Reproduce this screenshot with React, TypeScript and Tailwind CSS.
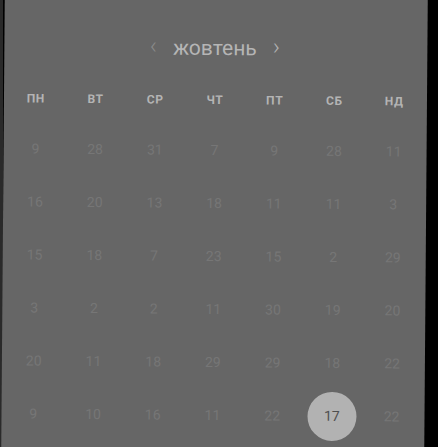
const weekdays = ['пн', 'вт', 'ср', 'чт', 'пт', 'сб', 'нд'];

const rows: number[][] = [
  [9, 28, 31, 7, 9, 28, 11],
  [16, 20, 13, 18, 11, 11, 3],
  [15, 18, 7, 23, 15, 2, 29],
  [3, 2, 2, 11, 30, 19, 20],
  [20, 11, 18, 29, 29, 18, 22],
  [9, 10, 16, 11, 22, 17, 22],
];

const App = () => {
  return (
    <div className="w-[438px] h-[447px] overflow-hidden bg-black" style={{ fontFamily: 'Roboto, "Open Sans", sans-serif' }}>
      <div className="flex h-full w-full">
        <div className="w-[3px] shrink-0 bg-[#2a2a2a]" />
        <div className="relative w-[423px] h-[460px] -mt-[6px] shrink-0 bg-[#666666] rotate-[0.45deg] origin-center">
          {/* Month switcher */}
          <div className="flex items-center justify-center gap-[16px] pt-[30px] h-[78px] -ml-[2px]">
            <span className="text-[24px] font-light leading-none text-[#8a8a8a] -mt-[5px]">‹</span>
            <span className="text-[21px] leading-none text-[#b5b5b5]">жовтень</span>
            <span className="text-[24px] font-light leading-none text-[#b0b0b0] -mt-[5px]">›</span>
          </div>

          {/* Weekday headings */}
          <div className="grid grid-cols-7 w-[420px] pl-[2px] mt-[14px]">
            {weekdays.map((d) => (
              <div key={d} className="text-center text-[12px] font-bold uppercase tracking-[0.6px] text-[#b4b4b4] leading-[28px]">
                {d}
              </div>
            ))}
          </div>

          {/* Days */}
          <div className="grid grid-cols-7 w-[420px] pl-[2px] mt-[10px]">
            {rows.map((row, r) =>
              row.map((n, c) => {
                const selected = r === 5 && c === 5;
                return (
                  <div key={`${r}-${c}`} className="h-[53px] flex items-center justify-center">
                    {selected ? (
                      <div className="w-[49px] h-[49px] rounded-full bg-[#b2b2b2] flex items-center justify-center text-[14px] text-[#4f4f4f]">
                        {n}
                      </div>
                    ) : (
                      <span className="text-[14px] text-[#767676]">{n}</span>
                    )}
                  </div>
                );
              })
            )}
          </div>
        </div>
      </div>
    </div>
  );
};

export default App;
